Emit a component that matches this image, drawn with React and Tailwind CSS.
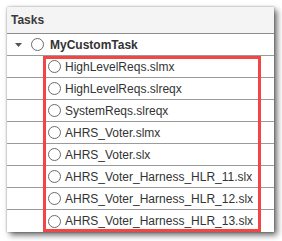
const files = [
  "HighLevelReqs.slmx",
  "HighLevelReqs.slreqx",
  "SystemReqs.slreqx",
  "AHRS_Voter.slmx",
  "AHRS_Voter.slx",
  "AHRS_Voter_Harness_HLR_11.slx",
  "AHRS_Voter_Harness_HLR_12.slx",
  "AHRS_Voter_Harness_HLR_13.slx",
];

const Circle = () => (
  <span className="w-[13px] h-[13px] rounded-full border border-[#6b6b6b] bg-white shrink-0" />
);

export default function App() {
  return (
    <div className="w-[282px] h-[241px] bg-white pl-[7px] pt-[7px] font-['Liberation_Sans',Arial,sans-serif]">
      <div className="relative w-[267px] h-[225px] bg-white shadow-[3px_3px_6px_rgba(0,0,0,0.6),0_0_2px_rgba(0,0,0,0.35)]">
        {/* Header */}
        <div className="h-[27px] bg-[#f4f4f4] border-b border-[#8c8c8c] flex items-center pl-[4px]">
          <span className="text-[12px] font-bold text-[#3a3a3a]">Tasks</span>
        </div>

        {/* Parent row */}
        <div className="h-[22px] border-b border-[#9a9a9a] flex items-center">
          <svg width="7" height="4" viewBox="0 0 7 4" className="ml-[8px] mr-[9px]">
            <path d="M0 0 L7 0 L3.5 4 Z" fill="#555" />
          </svg>
          <Circle />
          <span className="ml-[6px] text-[12px] font-bold text-[#333]">MyCustomTask</span>
        </div>

        {/* Child rows */}
        {files.map((f, i) => (
          <div
            key={f}
            className={`h-[22px] flex items-center pl-[41px] ${i < files.length - 1 ? "border-b border-[#9a9a9a]" : ""}`}
          >
            <Circle />
            <span className="ml-[4px] text-[12px] text-[#333]">{f}</span>
          </div>
        ))}

        {/* Highlight annotation */}
        <div className="absolute left-[36px] top-[49px] w-[218px] h-[176px] border-[3px] border-[#f24545]" />
      </div>
    </div>
  );
}
